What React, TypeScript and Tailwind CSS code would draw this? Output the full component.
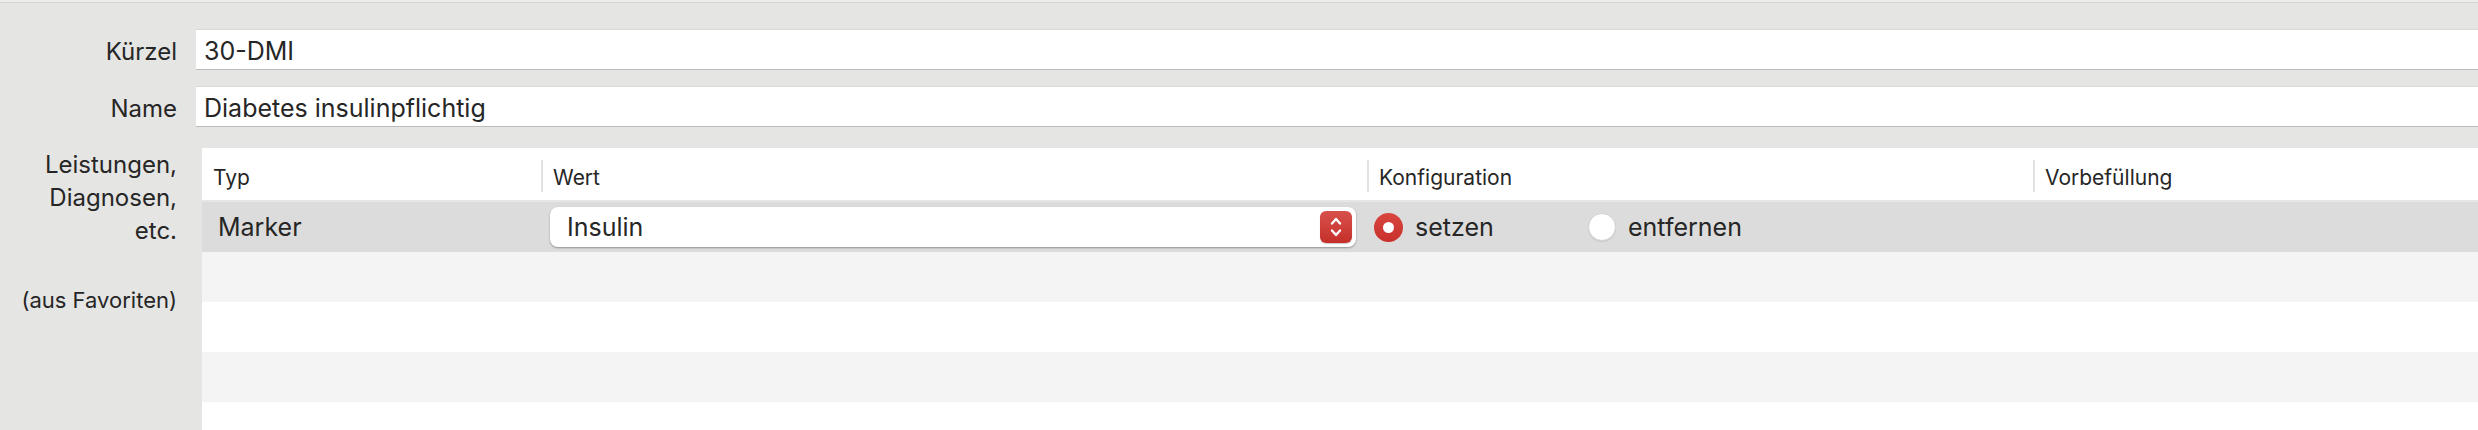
import React from "react";

const Stepper = () => (
  <div className="w-[32px] h-[32px] rounded-[6px] bg-gradient-to-b from-[#d8504b] to-[#c52f2a] flex items-center justify-center shadow-[0_1px_1px_rgba(0,0,0,0.2)]">
    <svg width="32" height="32" viewBox="0 0 32 32" fill="none">
      <polyline points="12,12.5 16,8 20,12.5" stroke="white" strokeWidth="2.4" strokeLinecap="round" strokeLinejoin="round" />
      <polyline points="12,19.5 16,24 20,19.5" stroke="white" strokeWidth="2.4" strokeLinecap="round" strokeLinejoin="round" />
    </svg>
  </div>
);

const Radio = ({ checked, label }: { checked?: boolean; label: string }) => (
  <div className="flex items-center gap-[12px]">
    {checked ? (
      <div className="w-[29px] h-[29px] rounded-full bg-gradient-to-b from-[#d9453f] to-[#c8302b] flex items-center justify-center">
        <div className="w-[11px] h-[11px] rounded-full bg-white" />
      </div>
    ) : (
      <div className="w-[28px] h-[28px] rounded-full bg-white border border-[#d2d2d2] shadow-[0_1px_1px_rgba(0,0,0,0.08)]" />
    )}
    <span className="text-[25px] pt-[2px]">{label}</span>
  </div>
);

const HeaderCell = ({ label, first }: { label: string; first?: boolean }) =>
  first ? (
    <div className="pl-[11px] pt-[14px] text-[21px]">{label}</div>
  ) : (
    <div className="flex items-start">
      <div className="w-[2px] h-[32px] mt-[12px] bg-[#e2e2e2]" />
      <span className="ml-[10px] pt-[14px] text-[21px]">{label}</span>
    </div>
  );

export default function App() {
  const cols = "grid grid-cols-[339px_826px_666px_1fr]";
  return (
    <div className="w-[2478px] h-[430px] overflow-hidden bg-[#e5e5e4] text-[#262626] font-['Inter','Noto_Sans',sans-serif]">
      <div className="h-[3px] bg-[#ececeb] border-b border-[#d3d3d2]" />

      {/* text fields */}
      <div className="grid grid-cols-[177px_1fr] gap-x-[19px] gap-y-[16px] pt-[26px]">
        <div className="flex items-center justify-end text-[24px] pt-[5px]">Kürzel</div>
        <div className="h-[41px] bg-white border-t border-[#d9d9d9] border-b border-b-[#bcbcbc] flex items-center pl-[8px] pt-[5px] text-[25px]">
          30-DMI
        </div>
        <div className="flex items-center justify-end text-[24px] pt-[5px]">Name</div>
        <div className="h-[41px] bg-white border-t border-[#d9d9d9] border-b border-b-[#bcbcbc] flex items-center pl-[8px] pt-[5px] text-[25px]">
          Diabetes insulinpflichtig
        </div>
      </div>

      {/* table section */}
      <div className="grid grid-cols-[177px_1fr] gap-x-[25px] mt-[21px]">
        <div className="text-right">
          <div className="text-[24px] leading-[33px]">
            Leistungen,
            <br />
            Diagnosen,
            <br />
            etc.
          </div>
          <div className="text-[22px] mt-[37px]">(aus Favoriten)</div>
        </div>

        <div className="flex flex-col">
          <div className={`${cols} h-[54px] bg-white border-b-2 border-[#e6e6e6]`}>
            <HeaderCell label="Typ" first />
            <HeaderCell label="Wert" />
            <HeaderCell label="Konfiguration" />
            <HeaderCell label="Vorbefüllung" />
          </div>

          <div className={`${cols} h-[50px] bg-[#dcdcdc] items-center`}>
            <div className="pl-[16px] pt-[2px] text-[25px]">Marker</div>
            <div className="pl-[9px]">
              <div className="w-[806px] h-[40px] bg-white rounded-[8px] shadow-[0_1px_2px_rgba(0,0,0,0.35)] flex items-center justify-between pl-[17px] pr-[4px]">
                <span className="text-[25px] pt-[2px]">Insulin</span>
                <Stepper />
              </div>
            </div>
            <div className="flex items-center pl-[7px]">
              <div className="w-[214px]">
                <Radio checked label="setzen" />
              </div>
              <Radio label="entfernen" />
            </div>
            <div />
          </div>

          <div className="h-[50px] bg-[#f3f4f3]" />
          <div className="h-[50px] bg-white" />
          <div className="h-[50px] bg-[#f3f4f3]" />
          <div className="h-[50px] bg-white" />
        </div>
      </div>
    </div>
  );
}
